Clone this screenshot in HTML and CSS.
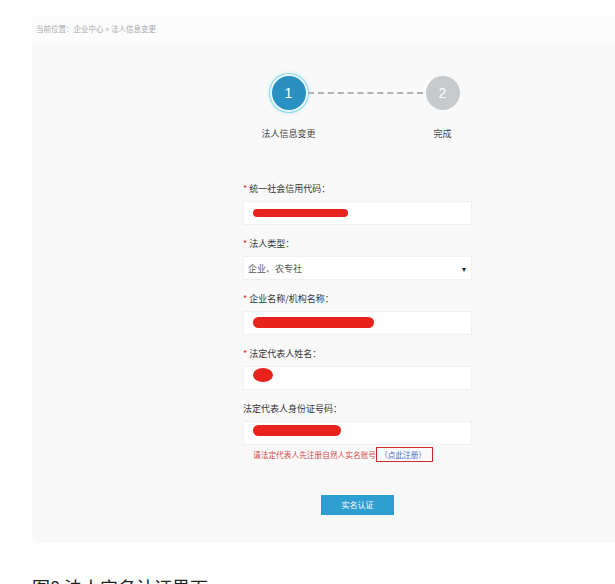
FILE: index.html
```html
<!DOCTYPE html>
<html lang="zh-CN">
<head>
	<meta charset="UTF-8">
	<title>法人实名认证</title>
<link rel="stylesheet" href="styles.css">
</head>
<body>
	<div class="shot">
		<div class="crumb">当前位置：企业中心 &gt; 法人信息变更</div>
		<div class="panel">
			<div class="steps">
				<div class="step">
					<span class="num num-on">1</span>
					<span class="step-label">法人信息变更</span>
				</div>
				<div class="dash"></div>
				<div class="step">
					<span class="num">2</span>
					<span class="step-label">完成</span>
				</div>
			</div>

			<div class="form">
				<div class="label"><i>*</i> 统一社会信用代码：</div>
				<div class="field"><span class="mark mark1"></span></div>

				<div class="label"><i>*</i> 法人类型：</div>
				<div class="field select"><span>企业、农专社</span><b>▾</b></div>

				<div class="label"><i>*</i> 企业名称/机构名称：</div>
				<div class="field"><span class="mark mark2"></span></div>

				<div class="label"><i>*</i> 法定代表人姓名：</div>
				<div class="field"><span class="mark mark3"></span></div>

				<div class="label">法定代表人身份证号码：</div>
				<div class="field"><span class="mark mark4"></span></div>

				<div class="hint">请法定代表人先注册自然人实名账号<span class="reg">（<em>点此注册</em>）</span></div>

				<div class="btn-row"><span class="btn">实名认证</span></div>
			</div>
		</div>
	</div>
	<p class="caption">图8 法人实名认证界面</p>
</body>
</html>
```

FILE: styles.css
```css
html, body {margin: 0; padding: 0; background: #fff;}
body {font-family: "Noto Sans CJK SC", "Noto Sans", sans-serif; color: #555; overflow: hidden;}

.shot {margin: 17px 0 0 32px;}
.crumb {height: 26px; line-height: 24px; padding-left: 4px; font-size: 7.5px; color: #aaa; background: #fcfcfc;}
.panel {height: 500px; background: #f9f9f9; border-bottom-left-radius: 8px; padding-top: 33px; box-sizing: border-box;}

.steps {display: flex; align-items: flex-start; width: 189px; margin-left: 239px;}
.step {display: flex; flex-direction: column; align-items: center; width: 35px; flex: none;}
.num {display: block; width: 34px; height: 34px; border-radius: 50%; background: #c6cacc; color: #fff; font-size: 14px; line-height: 34px; text-align: center; font-family: "Liberation Sans", sans-serif;}
.num-on {background: #2a90c2; box-shadow: 0 0 0 2px #e6f6fb, 0 0 0 3px #8fd5ea, 0 0 3px 4px #d8f0f7;}
.step-label {margin-top: 18px; font-size: 9px; line-height: 12px; color: #444; white-space: nowrap;}
.dash {flex: 1; margin: 16px 2px 0; border-top: 2px dashed #b3b3b3;}

.form {width: 229px; margin: 43px 0 0 211px;}
.label {font-size: 9px; line-height: 12px; color: #333; margin-bottom: 6px;}
.label i {font-style: normal; color: #d8312a;}
.field {height: 24px; background: #fff; border: 1px solid #f0f0f0; box-sizing: border-box; margin-bottom: 13px; display: flex; align-items: center; padding: 0 5px 0 9px;}
.select {padding-left: 4px; font-size: 9px; color: #555; justify-content: space-between;}
.select b {font-weight: normal; font-size: 8px; color: #222;}

.mark {display: block; background: #e8231c; border-radius: 6px;}
.mark1 {width: 95px; height: 8px;}
.mark2 {width: 121px; height: 11px; margin-top: -1px;}
.mark3 {width: 20px; height: 14px; border-radius: 50%; margin-top: -6px;}
.mark4 {width: 88px; height: 11px; margin-top: -5px;}

.hint {margin-top: -11px; font-size: 7.7px; line-height: 12px; color: #d24b4b; padding-left: 10px;}
.reg {display: inline-block; border: 1px solid #cf2a2a; padding: 1px 6px 0 3px; line-height: 12px; color: #4a6fc8;}
.reg em {font-style: normal;}

.btn-row {display: flex; justify-content: center; margin-top: 33px;}
.btn {width: 73px; height: 20px; line-height: 20px; text-align: center; background: #2f9ed0; color: #fff; font-size: 8px;}

.caption {margin: 31px 0 0 32px; font-size: 18px; line-height: 27px; color: #222;}
```
